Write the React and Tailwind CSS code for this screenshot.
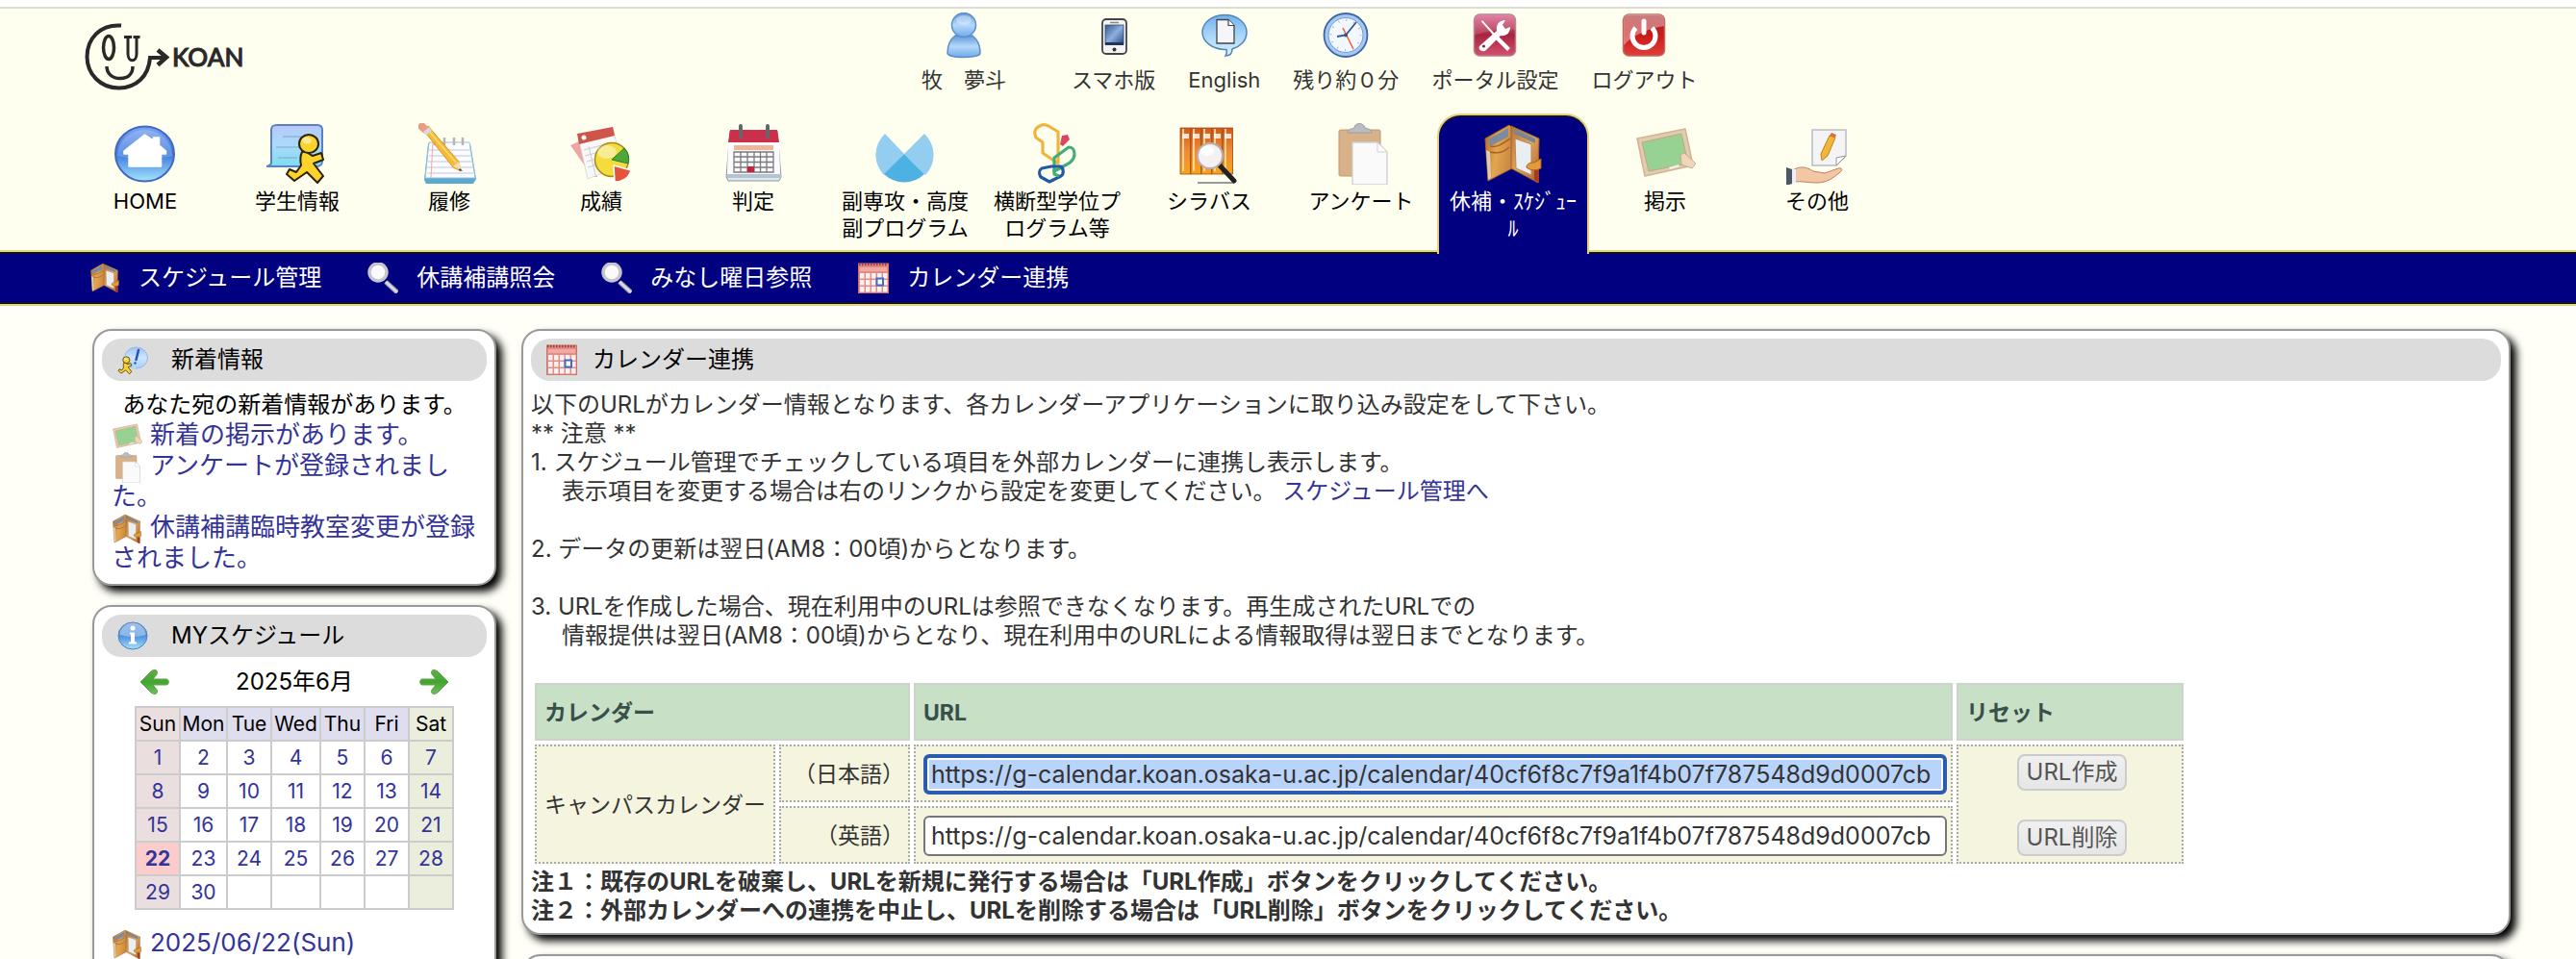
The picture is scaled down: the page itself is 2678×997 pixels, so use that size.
import React, { useId } from "react";

const FONT = "font-['Inter','Noto_Sans_CJK_JP',sans-serif]";

/* ---------- icons ---------- */

function Svg({ size = "size-16", box = 64, children }) {
  return (
    <svg viewBox={`0 0 ${box} ${box}`} className={`${size} shrink-0`} aria-hidden="true">
      {children}
    </svg>
  );
}

function Grad({ id, from, mid, to, x2 = 0, y2 = 1 }) {
  return (
    <linearGradient id={id} x1="0" y1="0" x2={x2} y2={y2}>
      <stop offset="0" stopColor={from} />
      {mid && <stop offset="0.5" stopColor={mid} />}
      <stop offset="1" stopColor={to} />
    </linearGradient>
  );
}

function Logo() {
  return (
    <svg viewBox="0 0 168 72" className="h-[72px] w-[168px] shrink-0" role="img" aria-label="KOAN">
      <g fill="none" stroke="#2a2829" strokeWidth="4">
        <path d="M38 4.500C16 3 2.500 18 2.500 37c0 18 14 32.500 33 32.500 18 0 31-12 32.500-31.500h15" />
        <path d="M76 30l9 7.500-9 8" strokeWidth="4.500" />
        <path d="M23 47c0 8 6 12.500 14 12.500S50 55 50 47" strokeWidth="3.500" />
        <ellipse cx="25" cy="27.500" rx="5.500" ry="12" strokeWidth="3.500" />
        <path d="M45 16v18c0 9 9 9 9 0V16M41 16.500h8M50.500 16.500h7" strokeWidth="3" />
      </g>
      <text x="91" y="47" fontSize="26" fontWeight="500" fill="#2a2829" stroke="#2a2829" strokeWidth="1" fontFamily="Lato, sans-serif">KOAN</text>
    </svg>
  );
}

function UserIcon() {
  const g = useId();
  return (
    <Svg size="size-12" box={48}>
      <defs><Grad id={g} from="#5f97dc" mid="#b5d9fb" to="#6fa9ea" /></defs>
      <path d="M7 42c0-10 4-15 8-18h18c4 3 8 8 8 18 0 6-34 6-34 0z" fill={`url(#${g})`} stroke="#5c8fc8" strokeWidth="1.500" />
      <circle cx="24" cy="13" r="12.500" fill={`url(#${g})`} stroke="#5c8fc8" strokeWidth="1.500" />
      <ellipse cx="24" cy="8" rx="8" ry="5" fill="#fff" opacity="0.35" />
    </Svg>
  );
}

function PhoneIcon() {
  const g = useId();
  return (
    <Svg size="size-12" box={48}>
      <defs><Grad id={g} from="#33568f" mid="#8fb0dc" to="#24477f" x2={1} /></defs>
      <rect x="12" y="7" width="25" height="36" rx="4" fill="#f4f4f4" stroke="#444" strokeWidth="1.800" />
      <path d="M20 10.500h9" stroke="#888" strokeWidth="1.500" />
      <rect x="15" y="13" width="19" height="20" fill={`url(#${g})`} stroke="#2f4a78" strokeWidth="0.800" />
      <rect x="15" y="31" width="19" height="3" fill="#1f3560" />
      <circle cx="24.500" cy="38.500" r="2" fill="#333" />
    </Svg>
  );
}

function EnglishIcon() {
  const g = useId();
  return (
    <Svg size="size-12" box={48}>
      <defs><Grad id={g} from="#6fb2ee" mid="#a9d6f9" to="#d3f1ff" /></defs>
      <path d="M24 2.500c13 0 23 8 23 18 0 9-7 15-15 17.500 0 4-2 7-7 7 1.500-2 1.500-4 1-6.500C11 38.500 1 30 1 20.500c0-10 10-18 23-18z" fill={`url(#${g})`} stroke="#5284b8" strokeWidth="1.500" />
      <path d="M16 7.500h12l6 6V32H16z" fill="#f5f5fa" stroke="#444" strokeWidth="1.300" />
      <path d="M28 7.500v6h6" fill="#fff" stroke="#444" strokeWidth="1.200" />
    </Svg>
  );
}

function ClockIcon() {
  return (
    <Svg size="size-12" box={48}>
      <circle cx="24" cy="23.500" r="22.500" fill="#a7c9f1" stroke="#3b66a6" strokeWidth="1.800" />
      <circle cx="24" cy="23.500" r="18" fill="#f3f8fe" stroke="#6f9bd3" strokeWidth="1" />
      <circle cx="24" cy="23.500" r="15.500" fill="none" stroke="#8aa6cc" strokeWidth="2" strokeDasharray="0.800 7.316" />
      <path d="M15 25l9-1.500L35 10" fill="none" stroke="#33558f" strokeWidth="1.800" />
      <path d="M21 16l11 22" stroke="#f0623f" strokeWidth="1.500" />
      <circle cx="24" cy="23.500" r="2" fill="#33558f" />
    </Svg>
  );
}

function ToolsIcon() {
  const g = useId();
  return (
    <Svg size="size-12" box={48}>
      <defs><Grad id={g} from="#df6f98" mid="#a8243e" to="#d2526f" /></defs>
      <rect x="2.500" y="2" width="43" height="43" rx="6" fill={`url(#${g})`} stroke="#b77c8d" strokeWidth="1.500" />
      <path d="M2.500 24V8a6 6 0 016-6h31a6 6 0 016 6v10C30 17 15 19 2.500 24z" fill="#fff" opacity="0.14" />
      <path d="M11 8l-1 1.500L21 22l3 5 13 13 3-3-13-13-4-3z" fill="#fff" />
      <path d="M8 35l18-16c-1-6 2-11 9-11l-3 5 3 4 5-2c0 7-5 10-10 9L15 39c-3 3-9 0-7-4z" fill="#fff" />
      <circle cx="12.500" cy="35" r="1.600" fill="#8c2338" />
    </Svg>
  );
}

function PowerIcon() {
  const g = useId();
  return (
    <Svg size="size-12" box={48}>
      <defs><Grad id={g} from="#a82c2c" mid="#c91a1a" to="#e0403a" /></defs>
      <rect x="2.500" y="2" width="43" height="43" rx="6" fill={`url(#${g})`} stroke="#c06a62" strokeWidth="1.500" />
      <path d="M3 34V8a6 6 0 016-6h30a6 6 0 016 6v6C32 16 14 22 3 34z" fill="#fff" opacity="0.38" />
      <path d="M15.500 16a12 12 0 1017 0" fill="none" stroke="#fff" strokeWidth="5" />
      <path d="M24 9v12" stroke="#fff" strokeWidth="5" strokeLinecap="round" />
    </Svg>
  );
}

function HomeIcon() {
  const g = useId();
  return (
    <Svg>
      <defs><Grad id={g} from="#7ba5f3" mid="#3c78dc" to="#a4e6fd" /></defs>
      <ellipse cx="31.500" cy="32" rx="30.500" ry="28.500" fill={`url(#${g})`} stroke="#4368c0" strokeWidth="2" />
      <path d="M3 34a28.500 27 0 0157 0c-16 4-40 4-57 0z" fill="#fff" opacity="0.2" />
      <path d="M31.500 12l9 6v-3h6v8l7 6v3h-5v13H15V32h-5v-3z" fill="#fff" stroke="#fff" strokeWidth="1.500" strokeLinejoin="round" />
    </Svg>
  );
}

function Runner() {
  return (
    <g stroke="#2b2208" strokeWidth="2" fill="#fbd32a" strokeLinejoin="round">
      <path d="M37 30c5-2 8 3 11 4l9-3 2 7-10 4 10 13-6 7-11-11-13 9-8-7 3-5 7 3 5-7c-1-5-1-10 1-14z" />
      <ellipse cx="44" cy="21.500" rx="10" ry="9.500" />
      <ellipse cx="42" cy="18" rx="5" ry="3.500" fill="#fff" opacity="0.5" stroke="none" />
    </g>
  );
}

function StudentIcon() {
  const g = useId();
  return (
    <Svg>
      <defs><Grad id={g} from="#b9c8fa" mid="#a9dbfb" to="#7fdcf0" /></defs>
      <path d="M5 42V7c0-4 2-5 6-5h42c4 0 5 2 5 5v32c0 5-2 6-6 6H0c4-1 5-2 5-4z" fill={`url(#${g})`} stroke="#5880c4" strokeWidth="2" />
      <path d="M17 14h32M10 25h30M12 36h20" stroke="#7191b5" strokeWidth="1" opacity="0.7" />
      <Runner />
    </Svg>
  );
}

function NotebookIcon() {
  return (
    <Svg>
      <path d="M10 21l44 1 6 36-3 5H8l-2-4z" fill="#5aa9cf" />
      <path d="M11 20h42l6 37H7z" fill="#fcfcff" stroke="#8fc3e0" strokeWidth="1" />
      <path d="M11 28h43M11 34h44M10 40h46M9 46h48M9 52h48" stroke="#c3c6de" strokeWidth="1" />
      <path d="M15 20l-2 37" stroke="#f3a6a6" strokeWidth="1" />
      <path d="M17 15v8M27 15v8M37 15v8M46 15v8" stroke="#b5b5b5" strokeWidth="2.500" />
      <path d="M5 7l5-4 32 37 2 10-8-4z" fill="#f6bb33" stroke="#c88a1c" strokeWidth="0.800" />
      <path d="M8 5l31 36" stroke="#fbdc7c" strokeWidth="1.500" />
      <path d="M-2 5c-1-5 6-7 8-4l5 6-6 4z" transform="translate(1 0)" fill="#ec9c83" />
      <path d="M5 9l6-5 3 4-6 5z" fill="#d8d8dc" />
      <path d="M36 45l6-5 4 10z" fill="#f3dcb0" />
      <path d="M43 47l3 3-4-1z" fill="#333" />
    </Svg>
  );
}

function GradesIcon() {
  return (
    <Svg>
      <path d="M0 23l20-9 8 42-5 0z" fill="#efa5a2" />
      <path d="M8 14l36-10 9 40-35 14z" fill="#f8f8f8" stroke="#d4d4d4" strokeWidth="0.800" />
      <path d="M7 11L44 4l2 9L9 22z" fill="#cf5549" />
      <circle cx="14" cy="15" r="2.500" fill="#fff" />
      <path d="M14 28l26-7M15 34l26-7M17 40l24-7M18 46l20-6M19 24l7 30" stroke="#ccc" strokeWidth="1" />
      <circle cx="43" cy="38" r="17.500" fill="#f4dc3c" stroke="#a68e18" strokeWidth="1.500" />
      <ellipse cx="38" cy="30" rx="10" ry="7" fill="#fff" opacity="0.45" />
      <path d="M43 38l13-12a17.500 17.500 0 014 16z" fill="#4da73a" stroke="#2c7f28" strokeWidth="1" />
      <path d="M45 44l18 5c-2 8-9 12-17 12z" fill="#e4533a" stroke="#fff" strokeWidth="1.500" />
    </Svg>
  );
}

function JudgeIcon() {
  return (
    <Svg>
      <path d="M8 8h49l4 48-2 4H6l-2-4z" fill="#dfe7ee" stroke="#8b98a5" strokeWidth="1" />
      <path d="M8 7h49l2 13H6z" fill="#cc2f4c" />
      <path d="M6 20h53l1 33H5z" fill="#fbfbfb" />
      <path d="M5 55h56" stroke="#b5c2cf" strokeWidth="4" />
      <path d="M12 23h41v5H12z" fill="#f1b59c" />
      <path d="M12 30h41v21H12zM12 35h41M12 40.500h41M12 46h41M19 30v21M26 30v21M33 30v21M39.500 30v21M46 30v21" fill="none" stroke="#7a7a80" strokeWidth="1.300" />
      <rect x="26" y="45" width="7" height="6" fill="#c9203c" />
      <path d="M19 3v11M47 3v11" stroke="#666" strokeWidth="4" strokeLinecap="round" />
    </Svg>
  );
}

function MinorIcon() {
  return (
    <Svg>
      <path d="M31 32L11 11a30 30 0 00-1 43z" fill="#93cdf0" />
      <path d="M31 32l21-21a30 30 0 011 43z" fill="#93cdf0" />
      <path d="M31 32L10 53a30 30 0 0042 0z" fill="#4eb1e4" />
    </Svg>
  );
}

function ProgramIcon() {
  return (
    <Svg>
      <g fill="none" strokeWidth="3.200" strokeLinejoin="round">
        <path d="M16 2c3-1 5 0 7 1l10 6v33L17 31V20l-7-5C7 8 10 4 16 2z" stroke="#f0b43c" />
        <path d="M29 36l15-11c3 0 6 2 6 7 0 6-4 9-8 11l-13 7z" stroke="#3fae78" />
        <path d="M16 47l10-2h10c3 3 3 8 0 10l-12 6-9-5c-2-3-2-7 1-9z" stroke="#2458a6" />
        <path d="M29 48v5l5 2" stroke="#3fae78" />
      </g>
      <path d="M37 13l6-1 2 5-7 7-3-2z" fill="#d84760" />
    </Svg>
  );
}

function SyllabusIcon() {
  const g = useId();
  return (
    <Svg>
      <defs><Grad id={g} from="#d35a1c" mid="#f08a35" to="#f5a41d" /></defs>
      {[2, 13, 24, 35, 46].map((x) => (
        <g key={x}>
          <rect x={x} y="5" width="10.500" height="48" fill={`url(#${g})`} stroke="#9c4a14" strokeWidth="0.800" />
          <rect x={x + 2} y="6" width="2" height="44" fill="#ffe2a6" opacity="0.8" />
          <rect x={x + 2} y="11" width="7" height="5" fill="#fff" opacity="0.8" />
        </g>
      ))}
      <path d="M20 62h38" stroke="#9a9a9a" strokeWidth="2" />
      <path d="M43 44l15 16" stroke="#222" strokeWidth="5" strokeLinecap="round" />
      <circle cx="33" cy="34" r="13" fill="#f4f1f2" stroke="#b9b0ae" strokeWidth="2" />
      <ellipse cx="30" cy="29" rx="7" ry="5" fill="#fff" />
    </Svg>
  );
}

function ClipboardIcon({ size }) {
  return (
    <Svg size={size}>
      <rect x="9" y="7" width="43" height="48" rx="1.500" fill="#d8b188" stroke="#c09a70" strokeWidth="1" />
      <path d="M18 10c0-4 4-4 7-5 0-6 10-6 11 0 3 1 7 1 7 5z" fill="#b9bcc0" stroke="#9a9da2" strokeWidth="1" />
      <path d="M23 20h26l10 10v34H23z" fill="#fafafa" stroke="#cfcfcf" strokeWidth="1.300" />
      <path d="M49 20v10h10z" fill="#fff" stroke="#cfcfcf" strokeWidth="1" />
    </Svg>
  );
}

function WalletIcon({ size }) {
  const a = useId();
  const b = useId();
  return (
    <Svg size={size}>
      <defs>
        <Grad id={a} from="#b4692a" mid="#e3a650" to="#cd8a42" x2={1} y2={0.3} />
        <Grad id={b} from="#b87436" mid="#e0a65c" to="#ad5a28" x2={1} y2={1} />
      </defs>
      <path d="M3 16L28 2l3 3v42L6 60z" fill={`url(#${a})`} stroke="#a0622c" strokeWidth="1" />
      <path d="M6 17l21-12v9L8 24z" fill="#7c8ba0" />
      <path d="M8 24c9 2 14-4 21-8M8 30c8 2 14 1 20-5" fill="none" stroke="#a66325" strokeWidth="1.500" />
      <path d="M4 28l4 2 1 27-3 2z" fill="#d9ceb0" />
      <path d="M30 3l29 13-1 46-28-15z" fill={`url(#${b})`} stroke="#a0622c" strokeWidth="1" />
      <path d="M33 6l22 10v5L33 11z" fill="#7b8694" />
      <path d="M34 16l17 6v32l-16-7z" fill="#e9eef2" stroke="#bb8a4d" strokeWidth="1" />
      <path d="M61 37v10c-6 3-12 2-15-1 0-4 4-5 8-5z" fill="#e19a3c" stroke="#a8611d" strokeWidth="1" />
      <path d="M54 49h5v13l-5-3z" fill="#a63a22" />
    </Svg>
  );
}

function BoardIcon({ size }) {
  return (
    <Svg size={size}>
      <path d="M3 16L53 6l8 38L11 55z" fill="#e3cbae" stroke="#d0b596" strokeWidth="1.500" strokeLinejoin="round" />
      <path d="M8 20l41-9 7 31-41 8z" fill="#97d293" stroke="#bda786" strokeWidth="1" />
      <path d="M36 46l10-3 1 2-10 3z" fill="#fff" opacity="0.8" />
      <path d="M48 33l4-2 12 11-4 5-11-4z" fill="#efd6bb" stroke="#c9ab8a" strokeWidth="1" />
    </Svg>
  );
}

function OtherIcon() {
  return (
    <Svg>
      <path d="M27 7h35v27l-10 10H27z" fill="#f4f4f6" stroke="#b9bcc2" strokeWidth="1.500" />
      <path d="M62 34l-10 10v-8z" fill="#fff" stroke="#999" strokeWidth="1" />
      <path d="M45 13l6 2-8 19-6 5-1-7z" fill="#f3b738" stroke="#b9831c" strokeWidth="1" />
      <path d="M45 13l6 2 1-3-5-2z" fill="#de6a4a" />
      <path d="M8 48c6-3 13-3 20 2l12 2 14-5c4-1 5 2 2 4-7 6-14 11-24 11-9 0-17-2-24-1z" fill="#f3c6a4" stroke="#b98365" strokeWidth="1" />
      <path d="M5 47l5 1v14l-5 1z" fill="#eceff4" />
      <path d="M0 46l6 2v15l-6 2z" fill="#4a5866" />
    </Svg>
  );
}

function SearchIcon() {
  return (
    <Svg size="size-8" box={32}>
      <path d="M19 20l12 11" stroke="#9da0ab" strokeWidth="5" />
      <path d="M19 20l12 11" stroke="#d9dae2" strokeWidth="2.500" />
      <circle cx="11" cy="10" r="9" fill="#fafafc" stroke="#c4c5cc" strokeWidth="3.500" />
    </Svg>
  );
}

function CalendarIcon() {
  return (
    <Svg size="size-8" box={32}>
      <rect x="0.500" y="1" width="31" height="30.500" fill="#e38b84" stroke="#cf746c" />
      <path d="M1 2h30" stroke="#9c3f3a" strokeWidth="2.500" strokeDasharray="1.500 1.500" />
      <path d="M2 5h28v4H2z" fill="#f0aaa4" />
      {[11, 18, 25].map((y) =>
        [2, 8, 14, 20, 26].map((x) => <rect key={`${x}-${y}`} x={x} y={y} width="4.500" height="5.500" fill="#fdf1ef" />)
      )}
      <rect x="19.500" y="16.500" width="6.500" height="7" fill="#fff" stroke="#3f6bd0" strokeWidth="2" />
    </Svg>
  );
}

function NewsIcon() {
  const g = useId();
  return (
    <Svg size="size-8">
      <defs><Grad id={g} from="#9cc3f5" mid="#cfe4fc" to="#a7cff8" /></defs>
      <ellipse cx="39" cy="28" rx="24" ry="22" fill={`url(#${g})`} stroke="#86aee0" strokeWidth="1.500" />
      <path d="M32 46l-4 10 12-8z" fill="#b8d8fa" />
      <path d="M44 12l-5 20" stroke="#2a50b8" strokeWidth="5" strokeLinecap="round" />
      <circle cx="37" cy="39" r="2.500" fill="#2a50b8" />
      <g transform="translate(-13 17) scale(0.72)"><Runner /></g>
    </Svg>
  );
}

function InfoIcon() {
  const g = useId();
  return (
    <Svg size="size-8">
      <defs><Grad id={g} from="#6b9fd8" mid="#4a8fdc" to="#a8e2fc" /></defs>
      <ellipse cx="32" cy="32" rx="30" ry="28" fill={`url(#${g})`} stroke="#4f7fbe" strokeWidth="2" />
      <path d="M5 30a27 25 0 0154 0c-15 5-39 5-54 0z" fill="#fff" opacity="0.35" />
      <circle cx="32" cy="16" r="5" fill="#fff" />
      <path d="M26 25h10v20h4v4H24v-4h4V29h-2z" fill="#fff" />
    </Svg>
  );
}

function ArrowIcon({ flip }) {
  const g = useId();
  return (
    <svg viewBox="0 0 32 28" className={flip ? "h-7 w-8 -scale-x-100" : "h-7 w-8"} aria-hidden="true">
      <defs><Grad id={g} from="#62ad4c" mid="#42a52f" to="#72bd62" /></defs>
      <path d="M2 14L13 3c4-3 8-1 6 3l-4 5h14c3 0 3 6 0 6H15l4 5c2 4-2 6-6 3z" fill={`url(#${g})`} stroke="#5aa348" strokeWidth="1" strokeLinejoin="round" />
    </svg>
  );
}

/* ---------- data ---------- */

const TOOLS = [
  { label: "牧　夢斗", icon: <UserIcon />, cls: "mr-[34px]" },
  { label: "スマホ版", icon: <PhoneIcon /> },
  { label: "English", icon: <EnglishIcon /> },
  { label: "残り約０分", icon: <ClockIcon /> },
  { label: "ポータル設定", icon: <ToolsIcon /> },
  { label: "ログアウト", icon: <PowerIcon /> },
];

const NAV = [
  { label: "HOME", icon: <HomeIcon /> },
  { label: "学生情報", icon: <StudentIcon /> },
  { label: "履修", icon: <NotebookIcon /> },
  { label: "成績", icon: <GradesIcon /> },
  { label: "判定", icon: <JudgeIcon /> },
  { label: "副専攻・高度\n副プログラム", icon: <MinorIcon /> },
  { label: "横断型学位プ\nログラム等", icon: <ProgramIcon /> },
  { label: "シラバス", icon: <SyllabusIcon /> },
  { label: "アンケート", icon: <ClipboardIcon /> },
  { label: "休補・ｽｹｼﾞｭｰ\nﾙ", icon: <WalletIcon />, active: true },
  { label: "掲示", icon: <BoardIcon /> },
  { label: "その他", icon: <OtherIcon /> },
];

const SUBNAV = [
  { label: "スケジュール管理", icon: <WalletIcon size="size-8" /> },
  { label: "休講補講照会", icon: <SearchIcon /> },
  { label: "みなし曜日参照", icon: <SearchIcon /> },
  { label: "カレンダー連携", icon: <CalendarIcon /> },
];

const DAYS = ["Sun", "Mon", "Tue", "Wed", "Thu", "Fri", "Sat"];
const COL_WIDTHS = ["w-[46px]", "w-[49px]", "w-[46px]", "w-[51px]", "w-[46px]", "w-[46px]", "w-[46px]"];
const WEEKS = [0, 1, 2, 3, 4].map((w) => DAYS.map((_, d) => (w * 7 + d + 1 <= 30 ? w * 7 + d + 1 : null)));

const URL = "https://g-calendar.koan.osaka-u.ac.jp/calendar/40cf6f8c7f9a1f4b07f787548d9d0007cb";

/* ---------- parts ---------- */

function Panel({ icon, title, gap = "gap-6", children }) {
  return (
    <section className="rounded-[20px] border-2 border-[#999] bg-white p-2 shadow-[6px_6px_8px_#000]">
      <h2 className={`flex h-11 items-center rounded-[20px] bg-[#dcdcdc] pl-4 text-2xl text-black ${gap}`}>
        {icon}
        {title}
      </h2>
      {children}
    </section>
  );
}

function NewsLink({ icon, children }) {
  return (
    <li>
      <a href="#" className="text-[#333399]">
        <span className="mr-2 inline-flex h-6 items-center align-middle">{icon}</span>
        {children}
      </a>
    </li>
  );
}

function MonthCalendar() {
  return (
    <div className="mx-auto mt-2 w-[332px] text-black">
      <div className="flex h-9 items-center justify-between px-1 text-2xl">
        <button type="button" aria-label="前の月"><ArrowIcon /></button>
        <span>2025年6月</span>
        <button type="button" aria-label="次の月"><ArrowIcon flip /></button>
      </div>
      <table className="mt-[7px] w-full table-fixed border-collapse text-center text-[21px] leading-7">
        <thead>
          <tr className="h-[35px]">
            {DAYS.map((d, i) => (
              <th
                key={d}
                className={`border-2 border-[#ccc] p-0 font-normal ${COL_WIDTHS[i]} ${i === 0 ? "bg-[#eadede]" : i === 6 ? "bg-[#ebeddd]" : "bg-[#dedeee]"}`}
              >
                {d}
              </th>
            ))}
          </tr>
        </thead>
        <tbody>
          {WEEKS.map((week, w) => (
            <tr key={w} className="h-[35px]">
              {week.map((day, i) => (
                <td
                  key={i}
                  className={`border-2 border-[#ccc] p-0 ${day === 22 ? "bg-[#fbcccc] font-bold" : i === 0 ? "bg-[#eadede]" : i === 6 ? "bg-[#ebeddd]" : "bg-white"}`}
                >
                  {day && <a href="#" className="text-[#333399]">{day}</a>}
                </td>
              ))}
            </tr>
          ))}
        </tbody>
      </table>
    </div>
  );
}

const HEAD = "h-[60px] border-2 border-[#ccd4cb] bg-[#c8e0c5] pt-0.5 pl-2 text-left font-bold text-[#37504a]";
const CELL = "h-[60px] border-2 border-dotted border-[#aaa] bg-[#f4f4df] pt-0.5 pl-2 pr-1";
const BUTTON = "h-[38px] rounded-lg border-2 border-[#ccc] bg-linear-to-b from-[#f0f0f0] to-[#e6e6e6] px-2 text-2xl leading-none text-[#555]";

function UrlTable() {
  return (
    <table className="w-[1722px] max-w-full table-fixed border-separate border-spacing-1 text-[23px]">
      <colgroup>
        <col className="w-[250px]" />
        <col className="w-[136px]" />
        <col />
        <col className="w-[236px]" />
      </colgroup>
      <thead>
        <tr>
          <th colSpan={2} className={HEAD}>カレンダー</th>
          <th className={HEAD}>URL</th>
          <th className={HEAD}>リセット</th>
        </tr>
      </thead>
      <tbody>
        <tr>
          <td rowSpan={2} className={`${CELL} whitespace-nowrap`}>キャンパスカレンダー</td>
          <td className={`${CELL} whitespace-nowrap text-right`}><label htmlFor="url-ja">（日本語）</label></td>
          <td className={CELL}>
            <input
              id="url-ja"
              type="text"
              readOnly
              defaultValue={URL}
              className="block h-[42px] w-full rounded-md border-4 border-[#2a5db0] bg-[#b9d4fa] px-1 text-[25px] shadow-[inset_0_0_0_2px_#fff] outline-none"
            />
          </td>
          <td rowSpan={2} className={CELL}>
            <div className="flex flex-col items-center gap-[30px]">
              <button type="button" className={BUTTON}>URL作成</button>
              <button type="button" className={BUTTON}>URL削除</button>
            </div>
          </td>
        </tr>
        <tr>
          <td className={`${CELL} whitespace-nowrap text-right`}><label htmlFor="url-en">（英語）</label></td>
          <td className={CELL}>
            <input
              id="url-en"
              type="text"
              readOnly
              defaultValue={URL}
              className="block h-[42px] w-full rounded-md border-2 border-[#767676] bg-white px-1.5 text-[25px] outline-none"
            />
          </td>
        </tr>
      </tbody>
    </table>
  );
}

export default function App() {
  return (
    <div className={`h-screen overflow-hidden bg-[#fffff7] text-[#333] ${FONT}`} lang="ja">
      <header className="border-t-[7px] border-white bg-[#ffffef]">
        <div className="flex items-start border-t-2 border-[#dcded4] pl-[88px]">
          <a href="#" className="pt-[13px]"><Logo /></a>
          <ul className="ml-[702px] flex h-[109px] gap-[34px] pt-1 text-[22px] leading-7">
            {TOOLS.map((t) => (
              <li key={t.label} className={t.cls}>
                <a href="#" className="flex flex-col items-center gap-2 whitespace-nowrap">
                  {t.icon}
                  {t.label}
                </a>
              </li>
            ))}
          </ul>
        </div>
        <nav className="flex pl-[72px]">
          {NAV.map((n) => (
            <a
              key={n.label}
              href="#"
              className={
                n.active
                  ? "relative z-10 -mb-1 flex h-[146px] w-[158px] flex-col items-center gap-[3px] rounded-t-[24px] border-2 border-b-0 border-[#e6d07c] bg-[#000080] pt-2 text-center text-[22px] leading-7 whitespace-pre text-white shadow-[inset_0_2px_0_#111133]"
                  : "flex h-[142px] w-[158px] flex-col items-center gap-[3px] pt-2.5 text-center text-[22px] leading-7 whitespace-pre text-black"
              }
            >
              {n.icon}
              {n.label}
            </a>
          ))}
        </nav>
        <nav className="border-y-2 border-[#e6d37f]">
          <div className="flex h-[54px] items-center gap-12 border-y-2 border-[#11111c] bg-[#000080] pl-[93px] text-2xl text-white">
            {SUBNAV.map((s) => (
              <a key={s.label} href="#" className="flex items-center gap-[19px] whitespace-nowrap">
                {s.icon}
                {s.label}
              </a>
            ))}
          </div>
        </nav>
      </header>

      <div className="flex items-start gap-[26px] pt-6 pr-[68px] pl-24">
        <aside className="flex w-[420px] shrink-0 flex-col gap-5">
          <Panel icon={<NewsIcon />} title="新着情報">
            <p className="mt-[10px] text-center text-2xl leading-[30px] text-black">あなた宛の新着情報があります。</p>
            <ul className="px-[10px] pb-[3px] text-[26px] leading-8">
              <NewsLink icon={<BoardIcon size="size-8" />}>新着の掲示があります。</NewsLink>
              <NewsLink icon={<ClipboardIcon size="size-8" />}>アンケートが登録されました。</NewsLink>
              <NewsLink icon={<WalletIcon size="size-8" />}>休講補講臨時教室変更が登録されました。</NewsLink>
            </ul>
          </Panel>
          <Panel icon={<InfoIcon />} title="MYスケジュール">
            <MonthCalendar />
            <ul className="mt-[18px] px-[10px] pb-10 text-[26px] leading-8">
              <NewsLink icon={<WalletIcon size="size-8" />}>2025/06/22(Sun)</NewsLink>
            </ul>
          </Panel>
        </aside>

        <main className="flex min-w-0 flex-1 flex-col gap-5">
          <Panel icon={<CalendarIcon />} title="カレンダー連携" gap="gap-4">
            <div className="pt-[10px] text-2xl leading-[30px]">
              <p>以下のURLがカレンダー情報となります、各カレンダーアプリケーションに取り込み設定をして下さい。</p>
              <p>** 注意 **</p>
              <p>1. スケジュール管理でチェックしている項目を外部カレンダーに連携し表示します。</p>
              <p className="pl-8">
                表示項目を変更する場合は右のリンクから設定を変更してください。{" "}
                <a href="#" className="text-[#333399]">スケジュール管理へ</a>
              </p>
              <p className="mt-[30px]">2. データの更新は翌日(AM8：00頃)からとなります。</p>
              <p className="mt-[30px]">3. URLを作成した場合、現在利用中のURLは参照できなくなります。再生成されたURLでの</p>
              <p className="mb-[30px] pl-8">情報提供は翌日(AM8：00頃)からとなり、現在利用中のURLによる情報取得は翌日までとなります。</p>
              <UrlTable />
              <p className="font-bold">注１：既存のURLを破棄し、URLを新規に発行する場合は「URL作成」ボタンをクリックしてください。</p>
              <p className="font-bold">注２：外部カレンダーへの連携を中止し、URLを削除する場合は「URL削除」ボタンをクリックしてください。</p>
            </div>
          </Panel>
          <Panel title="">{null}</Panel>
        </main>
      </div>
    </div>
  );
}
